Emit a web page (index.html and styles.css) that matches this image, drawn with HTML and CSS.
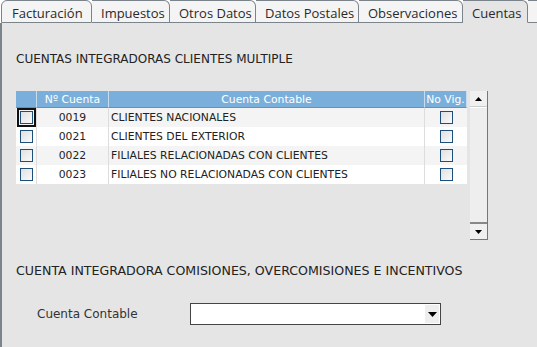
FILE: index.html
```html
<!DOCTYPE html>
<html>
<head>
<meta charset="utf-8">
<link rel="stylesheet" href="styles.css">
</head>
<body>
<div class="tabs">
  <div class="tab first">Facturación</div>
  <div class="tab">Impuestos</div>
  <div class="tab">Otros Datos</div>
  <div class="tab">Datos Postales</div>
  <div class="tab">Observaciones</div>
  <div class="tab active">Cuentas</div>
  <div class="tab rest"></div>
</div>
<div class="panel">
  <h2 class="title">CUENTAS INTEGRADORAS CLIENTES MULTIPLE</h2>
  <div class="gridwrap">
    <div class="grid">
      <div class="row head">
        <div class="c c0"></div>
        <div class="c c1">Nº Cuenta</div>
        <div class="c c2">Cuenta Contable</div>
        <div class="c c3">No Vig.</div>
      </div>
      <div class="row odd">
        <div class="c c0"><span class="cb sel"></span></div>
        <div class="c c1">0019</div>
        <div class="c c2 l">CLIENTES NACIONALES</div>
        <div class="c c3"><span class="cb"></span></div>
      </div>
      <div class="row">
        <div class="c c0"><span class="cb"></span></div>
        <div class="c c1">0021</div>
        <div class="c c2 l">CLIENTES DEL EXTERIOR</div>
        <div class="c c3"><span class="cb"></span></div>
      </div>
      <div class="row odd">
        <div class="c c0"><span class="cb"></span></div>
        <div class="c c1">0022</div>
        <div class="c c2 l">FILIALES RELACIONADAS CON CLIENTES</div>
        <div class="c c3"><span class="cb"></span></div>
      </div>
      <div class="row">
        <div class="c c0"><span class="cb"></span></div>
        <div class="c c1">0023</div>
        <div class="c c2 l">FILIALES NO RELACIONADAS CON CLIENTES</div>
        <div class="c c3"><span class="cb"></span></div>
      </div>
    </div>
    <div class="scroll">
      <div class="sbtn"><svg width="7" height="4" viewBox="0 0 7 4"><path d="M3.5 0 L7 4 L0 4 Z" fill="#000"/></svg></div>
      <div class="track"></div>
      <div class="sbtn down"><svg width="7" height="4" viewBox="0 0 7 4"><path d="M0 0 L7 0 L3.5 4 Z" fill="#000"/></svg></div>
    </div>
  </div>
  <h2 class="title t2">CUENTA INTEGRADORA COMISIONES, OVERCOMISIONES E INCENTIVOS</h2>
  <div class="field">
    <label class="lbl">Cuenta Contable</label>
    <div class="select"><span class="arrow"><svg width="9" height="5" viewBox="0 0 9 5"><path d="M0 0 L9 0 L4.5 5 Z" fill="#000"/></svg></span></div>
  </div>
</div>
</body>
</html>
```

FILE: styles.css
```css
html, body { margin: 0; padding: 0; }
body {
  width: 537px; height: 347px; overflow: hidden;
  background: #e5e5e5;
  font-family: "DejaVu Sans", sans-serif;
  color: #333;
}
.tabs {
  display: flex; height: 23px; background: #fff;
  box-sizing: border-box;
}
.tab {
  box-sizing: border-box; height: 23px;
  background: #f4f4f4;
  border: 1px solid #7b848a; border-left: none;
  border-top-right-radius: 6px;
  padding: 4px 9px 0 9px;
  font-family: "Open Sans", sans-serif; font-size: 13px; line-height: 16px;
  color: #2a2a2a; white-space: nowrap;
}
.tab.first { border-left: 1px solid #7b848a; border-top-left-radius: 6px; margin-left: 1px; width: 91px; padding-left: 10px; }
.tab:nth-child(2) { width: 78px; }
.tab:nth-child(3) { width: 86px; }
.tab:nth-child(4) { width: 103px; }
.tab:nth-child(5) { width: 104px; }
.tab.active { width: 65px; background: #e5e5e5; border-bottom-color: #e5e5e5; }
.tab.rest { flex: 1; }
.panel {
  border-left: 2px solid #7b848a;
  height: 324px; box-sizing: border-box;
  padding: 28px 0 0 14px;
}
.title {
  margin: 0; font-weight: normal; font-size: 12px; line-height: 16px;
  color: #222; padding-left: 0;
}
.gridwrap { display: flex; margin-top: 24px; height: 149px; }
.grid { width: 451px; }
.row { display: flex; height: 19px; background: #fff; color: #222; }
.row.odd { background: #f4f4f4; }
.row.head { height: 17px; background: #7aafdb; color: #fff; }
.c {
  box-sizing: border-box; font-size: 10.8px; line-height: 19px;
  text-align: center; border-right: 1px solid #ddd; white-space: nowrap; overflow: hidden;
  display: flex; align-items: center; justify-content: center;
}
.head .c { line-height: 17px; border-right: 1px solid #c7dcec; border-bottom: 1px solid #888; }
.c0 { width: 21px; }
.c1 { width: 72px; }
.c2 { width: 316px; }
.c3 { width: 42px; border-right: none; }
.c.l { justify-content: flex-start; padding-left: 2px; }
.cb {
  display: block; width: 13px; height: 13px; box-sizing: border-box;
  border: 1px solid #1d4f7c;
  background: linear-gradient(135deg, #e0e0e0, #fafafa);
}
.cb.sel { outline: 2px solid #111; outline-offset: 1px; }
.scroll {
  margin-left: 3px; width: 17px; display: flex; flex-direction: column;
  background: #eee; border-right: 1px solid #777;
}
.sbtn { height: 15px; display: flex; align-items: center; justify-content: center; background: #f0f0f0; border-bottom: 1px solid #ccc; }
.sbtn.down { border-bottom: 1px solid #777; border-top: 2px solid #888; }
.track { flex: 1; background: #eee; border-top: 1px solid #fff; }
.t2 { margin-top: 23px; font-size: 12.6px; }
.field { display: flex; align-items: center; margin-top: 24px; }
.lbl { font-size: 12px; width: 153px; padding-left: 21px; color: #333; }
.select {
  width: 251px; height: 22px; box-sizing: border-box;
  background: #fff; border: 1px solid #444; position: relative;
}
.arrow {
  position: absolute; right: 1px; top: 1px; bottom: 1px; width: 14px;
  background: #eee; display: flex; align-items: center; justify-content: center;
}
```
